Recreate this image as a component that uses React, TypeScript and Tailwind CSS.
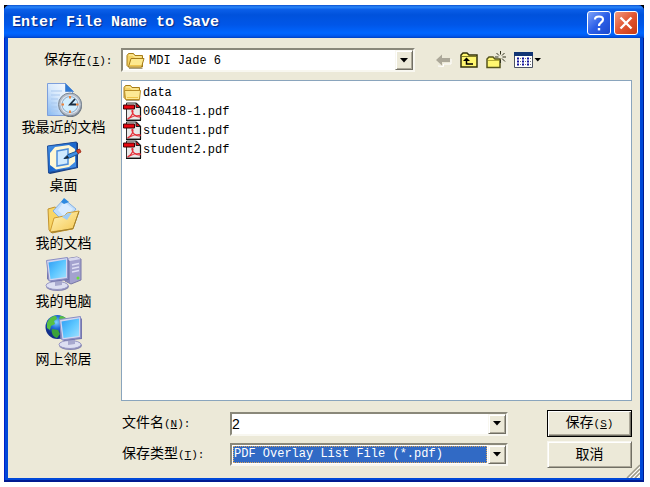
import type { ReactNode } from "react";

const sunken =
  "border-2 border-t-[#8a887a] border-l-[#8a887a] border-r-[#f8f7f0] border-b-[#f8f7f0] bg-white";
const raised =
  "border border-t-[#f8f7f0] border-l-[#f8f7f0] border-r-[#716f64] border-b-[#716f64] bg-[#ece9d8] shadow-[inset_1px_1px_0_#fff,inset_-1px_-1px_0_#aca899]";

function FolderIcon({ open = false }: { open?: boolean }) {
  return (
    <svg width="19" height="17" viewBox="0 0 19 17" className="shrink-0">
      <path
        d="M1 3.5 2.5 1.5h5L9 3.5h7.5V15H2.5L1 13.5z"
        fill="#f5d265"
        stroke="#a67c18"
      />
      <path d="M3 3h4l1.500 2h7" fill="none" stroke="#fff3b0" />
      {open ? (
        <path d="m2.500 15 2.500-8.500h13L15.500 15z" fill="#fde98f" stroke="#a67c18" />
      ) : (
        <path d="M1.500 6.500h16L16.500 15.500h-14z" fill="#fde995" stroke="#b98e28" />
      )}
      <path d="M4 13.500h11" stroke="#eec44c" />
      <path d="M3 16.500h13.500" stroke="#6e602f" opacity=".6" />
    </svg>
  );
}

function PdfIcon() {
  return (
    <svg width="19" height="19" viewBox="0 0 19 19" className="shrink-0">
      <path d="M3.500 1h10l4 4v13h-14z" fill="#e9e9e9" stroke="#333" />
      <path d="M3 18.500h15M17.500 5v13" stroke="#111" strokeWidth="1.200" />
      <path d="M13 1v4.500h4.500z" fill="#e10b12" stroke="#222" />
      <path d="M.5 3h11v4H.5z" fill="#e80710" stroke="#3b0505" />
      <path
        d="M5 16.500c2.500-1 5-4.500 5-7 0-1.500-1.500-1.500-1 0 .8 3 3.500 5 7 5.500 2 0 1.500-1.500 0-1.500-4 0-7 1-9.500 2.500-1.500 1-1.500 1-1.500.5z"
        fill="none"
        stroke="#e5303a"
        strokeWidth="1.200"
      />
    </svg>
  );
}

function RecentIcon() {
  return (
    <svg width="38" height="36" viewBox="0 0 38 36">
      <defs>
        <linearGradient id="page" x1="1" y1="0" x2="0" y2="1">
          <stop stopColor="#fff" />
          <stop offset=".5" stopColor="#d9eafc" />
          <stop offset="1" stopColor="#86b8f2" />
        </linearGradient>
      </defs>
      <path d="M2.500 1.500h18l7 7v25h-25z" fill="url(#page)" stroke="#7d9fdc" />
      <path d="M20.500 1.500v8h8z" fill="#2f7ad4" stroke="#5b8fd4" />
      <path d="M6 9h11M6 13h9M6 17h7M6 21h6M6 25h6M6 29h7" stroke="#a9c8ee" />
      <circle cx="25.500" cy="23.500" r="11.500" fill="#66707c" />
      <circle cx="25" cy="22.500" r="11.500" fill="#b4bcc8" stroke="#7b8794" />
      <circle cx="25" cy="22.500" r="9.500" fill="#dfe7f0" />
      <circle cx="25" cy="22.500" r="8" fill="#d3efff" stroke="#8aa9c7" />
      <path
        d="M25 14v2.500M25 28.500V31M33.500 22.500H31M16.500 22.500H19"
        stroke="#f0843a"
        strokeWidth="2"
      />
      <path d="m30 17-5 5.500h6" fill="none" stroke="#1d2f42" strokeWidth="1.800" />
    </svg>
  );
}

function DesktopIcon() {
  return (
    <svg width="38" height="36" viewBox="0 0 38 36">
      <defs>
        <linearGradient id="desk" x2="1" y2="1">
          <stop stopColor="#4b97ea" />
          <stop offset=".5" stopColor="#1a66cc" />
          <stop offset="1" stopColor="#4f9cf0" />
        </linearGradient>
      </defs>
      <path d="m3 6 28-4 2 1v25L5 34l-2-1z" fill="#173d80" />
      <path d="m2.500 6 29-4v25.500l-28 5z" fill="url(#desk)" stroke="#1f4f9c" />
      <path d="m10 7 14-2 6 4v13l-6 5-13 2.500-6-4.500V13z" fill="#fff7d4" />
      <path d="m12 11 11-2v15l-11 2z" fill="#d0eaff" stroke="#4e8edb" strokeWidth="1.500" />
      <path d="m19 18.500 4-4 9-3.500 1.500 3-9 4z" fill="#3d8de4" stroke="#1e538f" />
      <path d="m18.500 19 4-3.500 1.500 2.500z" fill="#1b2938" />
      <path d="m31.500 10.500 3-1.500 1.500 3-3 1.500z" fill="#e2402a" stroke="#a4341f" />
    </svg>
  );
}

function DocumentsIcon() {
  return (
    <svg width="38" height="36" viewBox="0 0 38 36">
      <defs>
        <linearGradient id="fold" x2="1" y2="1">
          <stop stopColor="#fff6c0" />
          <stop offset="1" stopColor="#f5c64e" />
        </linearGradient>
      </defs>
      <path d="m3 11 7-2 4 3 18 2-5 17-20 4-3-3z" fill="#f8d565" stroke="#c2932e" />
      <path d="m8 13 11-12 12 10-11 14z" fill="#c0defc" stroke="#82b0e4" />
      <path d="m13 12 6-8 9 7-8 9z" fill="#d9ecff" />
      <path d="m16 4 3-4 5 4-5 2z" fill="#2f8ae0" />
      <path d="m5 34 4-14 10-2 3-3 12-2-6 18z" fill="url(#fold)" stroke="#cf9b2f" />
      <path d="m17 19 5-3.500 5-1-5 7.500z" fill="#9fcdf5" />
      <path d="m6 34.500 22-4 6-17" fill="none" stroke="#a0802e" />
    </svg>
  );
}

function Monitor() {
  return (
    <>
      <ellipse cx="12.500" cy="30.500" rx="11.500" ry="4.500" fill="#8787b1" />
      <ellipse cx="12" cy="29.500" rx="11" ry="4" fill="#dddff2" stroke="#9999c5" />
      <path d="m10 23 7-1v7l-7 1z" fill="#a8a9ce" />
      <path d="m2 5 20-3 2 2v20L6 26l-4-3z" fill="#7576ad" />
      <path d="m1.500 4.500 21-3v21L4 25z" fill="#d3d6f0" stroke="#8a8ec4" />
      <path d="m3.500 6.500 17.500-3V21L5.500 23z" fill="url(#screen)" />
    </>
  );
}

function ScreenGradient() {
  return (
    <defs>
      <linearGradient id="screen" x2="1" y2="1">
        <stop stopColor="#2f9cf4" />
        <stop offset=".5" stopColor="#5cc6ff" />
        <stop offset="1" stopColor="#9fe0ff" />
      </linearGradient>
    </defs>
  );
}

function ComputerIcon() {
  return (
    <svg width="38" height="36" viewBox="0 0 38 36">
      <ScreenGradient />
      <path d="m20 3 12-2 4 2v21l-10 4-6-3z" fill="#a3a2ce" stroke="#7776a7" />
      <path d="m20 3 12-2 4 2-11 2z" fill="#d8d8ee" />
      <path d="M25 5v22l-5-2V3z" fill="#8887b9" />
      <path d="m27 9 7-1.500M27 12.500l7-1.500M27 16l7-1.500" stroke="#dedef4" strokeWidth="1.500" />
      <circle cx="33" cy="22" r="1.500" fill="#66df37" />
      <Monitor />
    </svg>
  );
}

function NetworkIcon() {
  return (
    <svg width="38" height="36" viewBox="0 0 38 36">
      <defs>
        <radialGradient id="globe" cx=".45" cy=".3">
          <stop stopColor="#7fd5ff" />
          <stop offset=".5" stopColor="#226fdc" />
          <stop offset="1" stopColor="#122f8a" />
        </radialGradient>
      </defs>
      <ScreenGradient />
      <circle cx="12.500" cy="13" r="12" fill="url(#globe)" />
      <path d="M2 9c2-5 6-7.500 9-7l1 3-3 2 1 3-4 2-1 4-3-2z" fill="#57c043" />
      <path d="M15 2c4 0 6 2 7 4l-6 1-2-2z" fill="#57c043" />
      <path d="m7 15 6 1 2 4-3 4c-4-1-6-5-5-9z" fill="#3ba23a" />
      <g transform="translate(13 1)">
        <Monitor />
      </g>
    </svg>
  );
}

function DownArrow() {
  return (
    <svg width="8" height="5" viewBox="0 0 8 5">
      <path d="M0 0h8L4 4.500z" fill="#000" />
    </svg>
  );
}

function BackIcon() {
  return (
    <svg width="16" height="14" viewBox="0 0 16 14">
      <path d="m2 13 5.500.5V11H15V6" fill="none" stroke="#fff" />
      <path d="m0 7 6-5.500v3.500h8v4H6v3.500z" fill="#aca899" />
    </svg>
  );
}

function UpIcon() {
  return (
    <svg width="18" height="16" viewBox="0 0 18 16">
      <path d="M1 15V3l2-2h4l2 2h8v12z" fill="#fff770" stroke="#33330b" strokeWidth="1.500" />
      <path d="M2 4.500h14" stroke="#807b25" />
      <path d="M6.500 7v5H13" fill="none" stroke="#000" strokeWidth="1.500" />
      <path d="m3 9 3.500-3.500L10 9z" fill="#000" />
    </svg>
  );
}

function NewFolderIcon() {
  return (
    <svg width="20" height="18" viewBox="0 0 20 18">
      <path d="M1 16.500V8l2-2h4l2 2h5v8.500z" fill="#fff770" stroke="#55541b" strokeWidth="1.500" />
      <path d="M2 9.500h11" stroke="#b4ac35" />
      <path
        d="M14.500 0v3.500M14.500 8.500V12M9 6h3.500M16.500 6H20M10.500 2l2.500 2.500M16 7.500l3 3M18.500 2 16 4.500"
        stroke="#33331f"
      />
    </svg>
  );
}

function ViewIcon() {
  return (
    <svg width="28" height="17" viewBox="0 0 28 17">
      <path d="M.5.5h18v15H.5z" fill="#fff" stroke="#4a5162" />
      <path d="M0 0h19v4H0z" fill="#123574" />
      <path
        d="M3 6.500h2M8 6.500h2M13 6.500h2M3 9.500h2M8 9.500h2M13 9.500h2M3 12.500h2M8 12.500h2M13 12.500h2"
        stroke="#15159c"
        strokeWidth="2"
      />
      <path d="M6 6.500h1M11 6.500h1M16 6.500h1M6 9.500h1M11 9.500h1M16 9.500h1M6 12.500h1M11 12.500h1M16 12.500h1" stroke="#777" />
      <path d="M20.500 6h6.500L23.750 9.500z" fill="#000" />
    </svg>
  );
}

const places: { name: string; icon: ReactNode }[] = [
  { name: "我最近的文档", icon: <RecentIcon /> },
  { name: "桌面", icon: <DesktopIcon /> },
  { name: "我的文档", icon: <DocumentsIcon /> },
  { name: "我的电脑", icon: <ComputerIcon /> },
  { name: "网上邻居", icon: <NetworkIcon /> },
];

const files = [
  { name: "data", folder: true },
  { name: "060418-1.pdf", folder: false },
  { name: "student1.pdf", folder: false },
  { name: "student2.pdf", folder: false },
];

const tools = [
  { name: "Back", icon: <BackIcon /> },
  { name: "Up", icon: <UpIcon /> },
  { name: "New folder", icon: <NewFolderIcon /> },
  { name: "View", icon: <ViewIcon /> },
];

function Hotkey({ letter, colon = true }: { letter: string; colon?: boolean }) {
  return (
    <span className="text-[11px]">
      (<u>{letter}</u>){colon && ":"}
    </span>
  );
}

function TitleBar() {
  return (
    <header className="flex h-[33px] shrink-0 items-center gap-[3px] rounded-t-[6px] bg-[linear-gradient(#0a50d0_0%,#2a86f8_6%,#0a5ee8_14%,#0052dc_30%,#0056e8_60%,#0066ff_85%,#0058ee_94%,#0040c0_100%)] pt-[3px] pr-[6px] pl-2">
      <h1 className="flex-1 text-[15px] font-bold text-white [text-shadow:1px_1px_1px_#0a2a80]">
        Enter File Name to Save
      </h1>
      <button
        aria-label="Help"
        className="flex h-6 w-6 items-center justify-center rounded-[3px] border border-white bg-[linear-gradient(135deg,#7ea2f8,#2c5fe8_50%,#1b49cc)]"
      >
        <svg width="14" height="16" viewBox="0 0 14 16">
          <path
            d="M3 4.500C3 .5 11 .5 11 4.500c0 3-4 3-4 6.500"
            fill="none"
            stroke="#fff"
            strokeWidth="2.200"
          />
          <path d="M5.800 13h2.400v2.400H5.800z" fill="#fff" />
        </svg>
      </button>
      <button
        aria-label="Close"
        className="flex h-6 w-6 items-center justify-center rounded-[3px] border border-white bg-[linear-gradient(135deg,#f09a80,#e25531_50%,#c63a14)]"
      >
        <svg width="14" height="14" viewBox="0 0 14 14">
          <path d="m1.500 1.500 11 11m0-11-11 11" stroke="#fff" strokeWidth="2.400" />
        </svg>
      </button>
    </header>
  );
}

export default function App() {
  return (
    <div className="flex h-screen flex-col bg-white pt-[5px] pr-[6px] pb-[5px] pl-1 font-['Liberation_Mono','Noto_Sans_CJK_SC',monospace] text-[14px] leading-5 text-black">
      <main className="flex flex-1 flex-col bg-black">
        <div className="flex flex-1 flex-col rounded-t-[6px] bg-[#0048d8] shadow-[inset_0_-2px_0_#001a90,inset_1px_0_0_#0020c8,inset_-1px_0_0_#001a90]">
          <TitleBar />
          <div className="relative mx-1 mb-1 flex flex-1 flex-col bg-[#ece9d8] pt-[10px] pb-[10px]">
            <div className="mb-2 flex h-6 items-center">
              <label htmlFor="folder" className="w-[113px] shrink-0 pl-9 whitespace-nowrap">
                保存在
                <Hotkey letter="I" />
              </label>
              <div className={`flex h-6 min-w-0 flex-1 items-center pl-[3px] ${sunken}`}>
                <FolderIcon open />
                <select
                  id="folder"
                  className="h-5 min-w-0 flex-1 appearance-none pt-px pl-1 text-[12px] outline-none"
                >
                  <option>MDI Jade 6</option>
                </select>
                <span className={`flex h-5 w-[18px] items-center justify-center ${raised}`}>
                  <DownArrow />
                </span>
              </div>
              <div className="flex w-[225px] shrink-0 items-center gap-2 pl-[21px]">
                {tools.map((tool) => (
                  <button key={tool.name} aria-label={tool.name}>
                    {tool.icon}
                  </button>
                ))}
              </div>
            </div>

            <div className="flex flex-1">
              <nav className="flex w-[113px] shrink-0 flex-col gap-[2px] pt-[2px] pr-[2px]">
                {places.map((place) => (
                  <button
                    key={place.name}
                    className="flex flex-col items-center whitespace-nowrap"
                  >
                    {place.icon}
                    {place.name}
                  </button>
                ))}
              </nav>
              <ul className="mr-2 flex-1 border border-[#8aa5bd] bg-white px-px pt-[2px] text-[12px]">
                {files.map((file) => (
                  <li key={file.name} className="flex h-[19px] items-center gap-px">
                    {file.folder ? <FolderIcon /> : <PdfIcon />}
                    {file.name}
                  </li>
                ))}
              </ul>
            </div>

            <div className="mt-[9px] mr-2 ml-[114px] grid grid-cols-[108px_1fr_85px] items-center gap-y-1">
              <label htmlFor="filename">
                文件名
                <Hotkey letter="N" />
              </label>
              <div className={`mr-[39px] flex h-6 ${sunken}`}>
                <input
                  id="filename"
                  defaultValue="2"
                  className="min-w-0 flex-1 font-['Liberation_Sans',sans-serif] text-[14px] outline-none"
                />
                <button
                  aria-label="File name history"
                  className={`flex w-[18px] items-center justify-center ${raised}`}
                >
                  <DownArrow />
                </button>
              </div>
              <button className="h-[27px] border border-black bg-[#ece9d8] shadow-[inset_1px_1px_0_#fff,inset_-1px_-1px_0_#716f64,inset_-2px_-2px_0_#aca899]">
                保存
                <Hotkey letter="S" colon={false} />
              </button>

              <label htmlFor="filetype">
                保存类型
                <Hotkey letter="T" />
              </label>
              <div className={`mr-[39px] flex h-[23px] ${sunken}`}>
                <select
                  id="filetype"
                  className="m-px min-w-0 flex-1 appearance-none border border-dotted border-[#d8a45a] bg-[#316ac5] text-[12px] leading-[15px] text-white outline-none"
                >
                  <option>PDF Overlay List File (*.pdf)</option>
                </select>
                <span className={`flex w-[18px] items-center justify-center ${raised}`}>
                  <DownArrow />
                </span>
              </div>
              <button className={`h-[27px] ${raised}`}>取消</button>
            </div>

            <svg width="14" height="14" viewBox="0 0 14 14" className="absolute right-0 bottom-0">
              <path d="M1 14 14 1M5 14l9-9M9 14l5-5" stroke="#9d9a8b" strokeWidth="1.500" />
              <path d="M3 14 14 3M7 14l7-7M11 14l3-3" stroke="#fff" />
            </svg>
          </div>
        </div>
      </main>
    </div>
  );
}
